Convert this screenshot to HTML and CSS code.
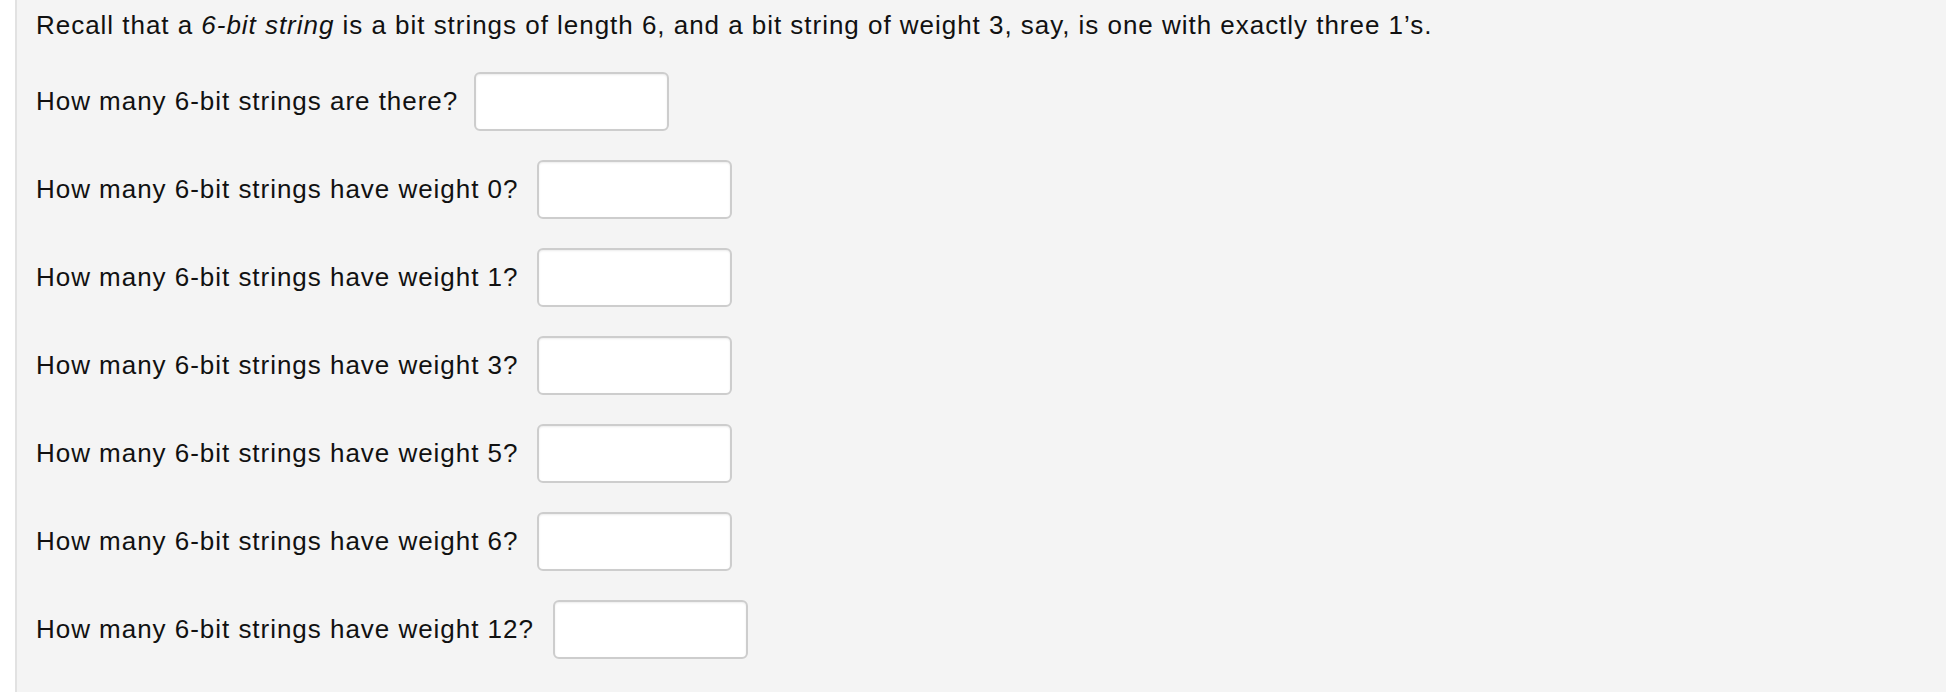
FILE: index.html
```html
<!DOCTYPE html>
<html>
<head>
<meta charset="utf-8">
<link rel="stylesheet" href="styles.css">
</head>
<body>
<div class="panel">
  <p class="intro">Recall that a <em>6-bit string</em> is a bit strings of length 6, and a bit string of weight 3, say, is one with exactly three 1’s.</p>
  <div class="q"><span>How many 6-bit strings are there?</span><input type="text" class="ans"></div>
  <div class="q"><span>How many 6-bit strings have weight 0?</span><input type="text" class="ans"></div>
  <div class="q"><span>How many 6-bit strings have weight 1?</span><input type="text" class="ans"></div>
  <div class="q"><span>How many 6-bit strings have weight 3?</span><input type="text" class="ans"></div>
  <div class="q"><span>How many 6-bit strings have weight 5?</span><input type="text" class="ans"></div>
  <div class="q"><span>How many 6-bit strings have weight 6?</span><input type="text" class="ans"></div>
  <div class="q"><span>How many 6-bit strings have weight 12?</span><input type="text" class="ans"></div>
</div>
</body>
</html>
```
FILE: styles.css
```css
html, body {
  margin: 0;
  padding: 0;
  background: #ffffff;
  height: 100%;
}
.panel {
  margin-left: 15px;
  border-left: 2px solid #e2e2e2;
  background: #f4f4f4;
  min-height: 692px;
  box-sizing: border-box;
  padding: 10px 0 0 19px;
  font-family: "Liberation Sans", Arial, sans-serif;
  font-size: 26px;
  letter-spacing: 0.97px;
  color: #111;
}
.intro {
  margin: 0 0 32px 0;
  line-height: 30px;
}
.q {
  display: flex;
  align-items: center;
  height: 59px;
  margin-bottom: 29px;
}
.ans {
  margin-left: 19px;
  width: 195px;
  height: 59px;
  box-sizing: border-box;
  border: 2px solid #cdcdcd;
  border-radius: 6px;
  background: #fff;
  box-shadow: inset 0 1px 2px rgba(0,0,0,0.08);
  font-size: 24px;
  padding: 0 8px;
  outline: none;
}
.q:first-of-type .ans {
  margin-left: 16px;
}
```
